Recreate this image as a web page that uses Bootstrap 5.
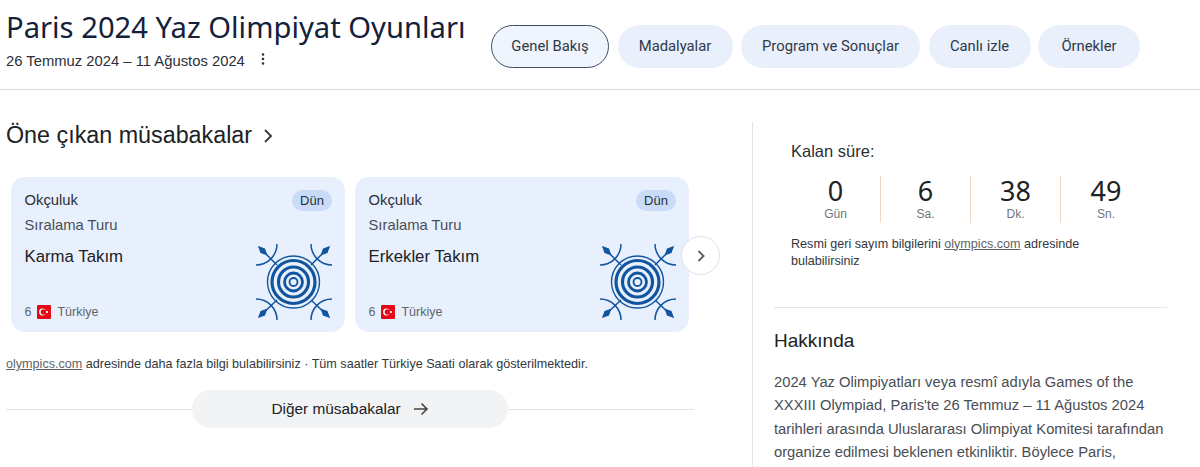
<!DOCTYPE html>
<html lang="tr"><head><meta charset="utf-8"><title>Paris 2024</title>
<link href="https://cdn.jsdelivr.net/npm/bootstrap@5.3.0/dist/css/bootstrap.min.css" rel="stylesheet">
<style>
body{font-family:"Liberation Sans",Arial,sans-serif;color:#202124;background:#fff;width:1200px;height:467px;overflow:hidden;}
.top-band{height:90px;border-bottom:1px solid #d6d8da;padding-left:6px;}
.title-box{width:485px;padding-top:9px;}
.page-title{font-family:"Noto Sans",sans-serif;font-weight:400;font-size:29.2px;line-height:36px;color:#14213a;margin:0;}
.date-line{font-size:14.8px;line-height:20px;margin-top:6px;color:#2b3038;}
.kebab{margin-left:16px;margin-top:-4px;}
.tab-row{padding-top:25px;gap:8.5px;}
.tab-pill{height:43px;border-radius:22px;background:#e9f0fc;color:#2e3a4a;font-family:"Roboto",sans-serif;font-size:14.8px;border:0;padding:0;display:flex;align-items:center;justify-content:center;}
.tab-pill.on{border:1px solid #3c4f63;background:#f0f4fc;}
.w1{width:118px}.w2{width:115px}.w3{width:179px}.w4{width:102px}.w5{width:102px;margin-left:-1px}
.main-zone{padding-top:32px;}
.left-zone{width:752px;padding-left:6px;position:relative;}
.sec-head{font-size:23.3px;line-height:26px;color:#202124;height:55px;}
.sec-head svg{margin-left:11px;margin-top:6px;}
.card-row{gap:10px;padding-left:5px;}
.match-box{width:334px;height:155px;border-radius:14px;background:#e8f0fd;padding:13px 13px 0 13.5px;position:relative;}
.box-top{font-size:14.8px;line-height:20px;color:#2a2f36;}
.day-tag{background:#c9dbf7;border-radius:11px;width:40px;height:21px;font-size:13px;line-height:21px;text-align:center;color:#26303c;}
.box-sub{font-size:14.8px;line-height:20px;color:#4a4f55;margin-top:4px;}
.box-team{font-size:16.8px;line-height:22px;margin-top:11px;color:#202124;}
.box-foot{position:absolute;left:13.5px;bottom:11px;font-size:12.5px;line-height:18px;color:#5f6368;gap:6px;}
.target-art{position:absolute;left:245px;top:67px;}
.next-round{position:absolute;left:681px;top:114px;width:39px;height:39px;border-radius:50%;background:#fff;border:1px solid #dfe1e5;display:flex;align-items:center;justify-content:center;}
.info-line{font-size:12.6px;line-height:18px;margin-top:23px;color:#33373c;}
.info-line a,.cd-note a{color:#5f6368;}
.more-row{margin-top:17px;width:688px;height:38px;}
.more-rule{flex:1 1 0;border-top:1px solid #e3e5e7;}
.more-btn{width:316px;height:38px;border-radius:19px;background:#f1f3f4;color:#202124;font-size:15.4px;gap:12px;}
.right-zone{width:448px;border-left:1px solid #e3e5e7;height:345px;padding-left:21px;}
.cd-box{padding-left:17px;width:393px;}
.cd-title{font-size:16.5px;line-height:20px;margin-top:19px;color:#2b2f34;}
.cd-grid{margin-top:15px;width:360px;}
.cd-col{width:90px;height:47px;text-align:center;border-right:1px solid #ecd8c8;}
.cd-col:last-child{border-right:0;}
.cd-num{font-family:"Noto Sans",sans-serif;font-weight:400;font-size:27px;line-height:30px;color:#202124;}
.cd-unit{font-size:12px;line-height:16px;color:#70757a;}
.cd-note{font-size:12.6px;line-height:17px;margin-top:12.5px;color:#33373c;}
.about-box{width:393px;border-top:1px solid #e3e5e7;margin-top:37px;padding-top:21px;}
.about-head{font-size:19px;line-height:24px;color:#202124;}
.about-text{font-size:14.75px;line-height:23.5px;color:#4a4e53;margin-top:18px;}
</style></head><body>
<header class="top-band d-flex">
 <div class="title-box">
  <h1 class="page-title">Paris 2024 Yaz Olimpiyat Oyunları</h1>
  <div class="d-flex align-items-center date-line"><span>26 Temmuz 2024 – 11 Ağustos 2024</span>
   <svg class="kebab" width="4" height="14" viewBox="0 0 4 14"><circle cx="2" cy="2.500" r="1.300" fill="#333"/><circle cx="2" cy="7" r="1.300" fill="#333"/><circle cx="2" cy="11.500" r="1.300" fill="#333"/></svg></div>
 </div>
 <nav class="d-flex align-items-start tab-row">
  <a class="tab-pill on w1 text-decoration-none">Genel Bakış</a><a class="tab-pill w2 text-decoration-none">Madalyalar</a><a class="tab-pill w3 text-decoration-none">Program ve Sonuçlar</a><a class="tab-pill w4 text-decoration-none">Canlı izle</a><a class="tab-pill w5 text-decoration-none">Örnekler</a>
 </nav>
</header>
<main class="d-flex main-zone">
 <section class="left-zone">
  <div class="sec-head d-flex align-items-start"><span>Öne çıkan müsabakalar</span><svg width="10" height="16" viewBox="0 0 10 16"><path d="M2 2l6 6-6 6" fill="none" stroke="#3c4043" stroke-width="2"/></svg></div>
  <div class="d-flex card-row">
   <article class="match-box">
    <div class="d-flex justify-content-between box-top"><span>Okçuluk</span><span class="day-tag">Dün</span></div>
    <div class="box-sub">Sıralama Turu</div><div class="box-team">Karma Takım</div>
    <div class="box-foot d-flex align-items-center"><span>6</span><svg width="14" height="14" viewBox="0 0 14 14"><rect width="14" height="14" rx="1" fill="#e30a17"/><circle cx="5.500" cy="7" r="3.400" fill="#fff"/><circle cx="6.400" cy="7" r="2.700" fill="#e30a17"/><circle cx="10" cy="7" r="1.100" fill="#fff"/></svg><span>Türkiye</span></div>
    <svg class="target-art" width="76" height="76" viewBox="0 0 76 76"><use href="#tgt"/></svg>
   </article>
   <article class="match-box">
    <div class="d-flex justify-content-between box-top"><span>Okçuluk</span><span class="day-tag">Dün</span></div>
    <div class="box-sub">Sıralama Turu</div><div class="box-team">Erkekler Takım</div>
    <div class="box-foot d-flex align-items-center"><span>6</span><svg width="14" height="14" viewBox="0 0 14 14"><rect width="14" height="14" rx="1" fill="#e30a17"/><circle cx="5.500" cy="7" r="3.400" fill="#fff"/><circle cx="6.400" cy="7" r="2.700" fill="#e30a17"/><circle cx="10" cy="7" r="1.100" fill="#fff"/></svg><span>Türkiye</span></div>
    <svg class="target-art" width="76" height="76" viewBox="0 0 76 76"><use href="#tgt"/></svg>
   </article>
  </div>
  <div class="next-round"><svg width="10" height="14" viewBox="0 0 10 14"><path d="M2.500 2l5 5-5 5" fill="none" stroke="#5f6368" stroke-width="2"/></svg></div>
  <p class="info-line mb-0"><a href="#">olympics.com</a> adresinde daha fazla bilgi bulabilirsiniz · Tüm saatler Türkiye Saati olarak gösterilmektedir.</p>
  <div class="more-row d-flex align-items-center">
   <span class="more-rule"></span>
   <div class="more-btn d-flex align-items-center justify-content-center"><span>Diğer müsabakalar</span><svg width="16" height="14" viewBox="0 0 16 14"><path d="M1 7h13M8.500 1.500L14 7l-5.500 5.500" fill="none" stroke="#444" stroke-width="1.600"/></svg></div>
   <span class="more-rule"></span>
  </div>
 </section>
 <aside class="right-zone">
  <div class="cd-box">
   <div class="cd-title">Kalan süre:</div>
   <div class="d-flex cd-grid">
    <div class="cd-col"><div class="cd-num">0</div><div class="cd-unit">Gün</div></div>
    <div class="cd-col"><div class="cd-num">6</div><div class="cd-unit">Sa.</div></div>
    <div class="cd-col"><div class="cd-num">38</div><div class="cd-unit">Dk.</div></div>
    <div class="cd-col"><div class="cd-num">49</div><div class="cd-unit">Sn.</div></div>
   </div>
   <div class="cd-note"><span>Resmi geri sayım bilgilerini </span><a href="#">olympics.com</a><span> adresinde</span><br><span>bulabilirsiniz</span></div>
  </div>
  <div class="about-box">
   <div class="about-head">Hakkında</div>
   <p class="about-text mb-0">2024 Yaz Olimpiyatları veya resmî adıyla Games of the XXXIII Olympiad, Paris'te 26 Temmuz – 11 Ağustos 2024 tarihleri arasında Uluslararası Olimpiyat Komitesi tarafından organize edilmesi beklenen etkinliktir. Böylece Paris,</p>
  </div>
 </aside>
</main>
<svg width="0" height="0" class="position-fixed"><defs><g id="tgt" fill="none" stroke="#12559f">
 <circle cx="37.500" cy="38" r="26" stroke-width="1.400"/><circle cx="37.500" cy="38" r="21.500" stroke-width="3.200"/><circle cx="37.500" cy="38" r="15" stroke-width="3.200"/><circle cx="37.500" cy="38" r="9" stroke-width="2.800"/><circle cx="37.500" cy="38" r="4" stroke-width="1.800"/>
 <g stroke-width="1.500"><path d="M0 21A21 21 0 0 0 21 0M76 21A21 21 0 0 1 55 0M0 55A21 21 0 0 1 21 76M76 55A21 21 0 0 0 55 76"/>
 <path d="M3 3L21 21M73 3L55 21M3 73L21 56M73 73L55 56"/></g>
 <g stroke="none" fill="#12559f"><path d="M2 2L9 4.500 11.500 11.500 4.500 9zM74 2L67 4.500 64.500 11.500 71.500 9zM2 74L9 71.500 11.500 64.500 4.500 67zM74 74L67 71.500 64.500 64.500 71.500 67z"/></g>
</g></defs></svg>
</body></html>
